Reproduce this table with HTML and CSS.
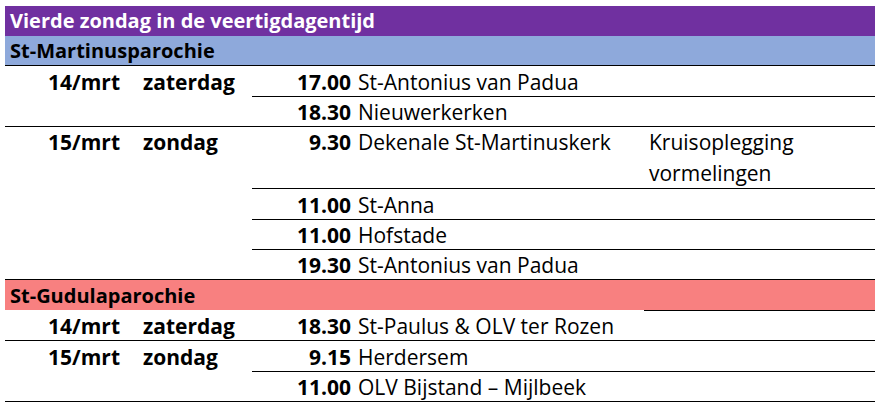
FILE: index.html
```html
<!DOCTYPE html>
<html lang="nl">
<head>
<meta charset="utf-8">
<title>Vierde zondag in de veertigdagentijd</title>
<link rel="stylesheet" href="styles.css">
</head>
<body>
<table class="sched">
  <colgroup>
    <col class="c-date"><col class="c-day"><col class="c-time"><col class="c-loc"><col class="c-note">
  </colgroup>
  <tr class="title"><td colspan="5">Vierde zondag in de veertigdagentijd</td></tr>
  <tr class="parish blue line-all"><td colspan="5">St-Martinusparochie</td></tr>
  <tr class="line-part"><td class="date">14/mrt</td><td class="day">zaterdag</td><td class="time">17.00</td><td class="loc">St-Antonius van Padua</td><td></td></tr>
  <tr class="line-all"><td></td><td></td><td class="time">18.30</td><td class="loc">Nieuwerkerken</td><td></td></tr>
  <tr class="line-part tall"><td class="date">15/mrt</td><td class="day">zondag</td><td class="time">9.30</td><td class="loc">Dekenale St-Martinuskerk</td><td class="note">Kruisoplegging<br>vormelingen</td></tr>
  <tr class="line-part"><td></td><td></td><td class="time">11.00</td><td class="loc">St-Anna</td><td></td></tr>
  <tr class="line-part"><td></td><td></td><td class="time">11.00</td><td class="loc">Hofstade</td><td></td></tr>
  <tr class="line-all"><td></td><td></td><td class="time">19.30</td><td class="loc">St-Antonius van Padua</td><td></td></tr>
  <tr class="parish pink line-note"><td colspan="4">St-Gudulaparochie</td><td></td></tr>
  <tr class="line-all"><td class="date">14/mrt</td><td class="day">zaterdag</td><td class="time">18.30</td><td class="loc">St-Paulus &amp; OLV ter Rozen</td><td></td></tr>
  <tr class="line-part"><td class="date">15/mrt</td><td class="day">zondag</td><td class="time">9.15</td><td class="loc">Herdersem</td><td></td></tr>
  <tr class="line-all"><td></td><td></td><td class="time">11.00</td><td class="loc">OLV Bijstand – Mijlbeek</td><td></td></tr>
</table>
</body>
</html>
```

FILE: styles.css
```css
html, body {
  margin: 0;
  padding: 0;
  background: #ffffff;
  overflow: hidden;
}
body {
  padding: 6px 0 0 5px;
  font-family: "Open Sans", "Noto Sans", sans-serif;
  font-size: 21px;
  color: #000;
}
.sched {
  border-collapse: collapse;
  table-layout: fixed;
  width: 870px;
}
.c-date { width: 123px; }
.c-day { width: 124px; }
.c-time { width: 103px; }
.c-loc { width: 289px; }
.c-note { width: 231px; }

.sched td {
  padding: 0;
  height: 29.4px;
  line-height: 28px;
  vertical-align: bottom;
  border-bottom: 1px solid transparent;
  white-space: nowrap;
}
.title td {
  background: #7030a0;
  color: #fff;
  font-weight: 700;
  font-size: 20px;
  padding-left: 5px;
  height: 29px;
}
.parish td {
  font-weight: 700;
  font-size: 20px;
  padding-left: 5px;
}
.blue td { background: #8ea9db; }
.pink td { background: #f88080; }

.date { text-align: right; padding-right: 8px !important; font-weight: 700; }
.day { padding-left: 15px !important; font-weight: 700; }
.time { text-align: right; padding-right: 4px !important; font-weight: 700; }
.loc { padding-left: 3px !important; }
.note { padding-left: 5px !important; white-space: normal; }
.tall td { vertical-align: top; line-height: 30.5px; height: 60px; }

.line-all td { border-bottom-color: #000; }
.line-part td:nth-child(n+3) { border-bottom-color: #000; }
.line-note td:last-child { border-bottom-color: #000; }
```
